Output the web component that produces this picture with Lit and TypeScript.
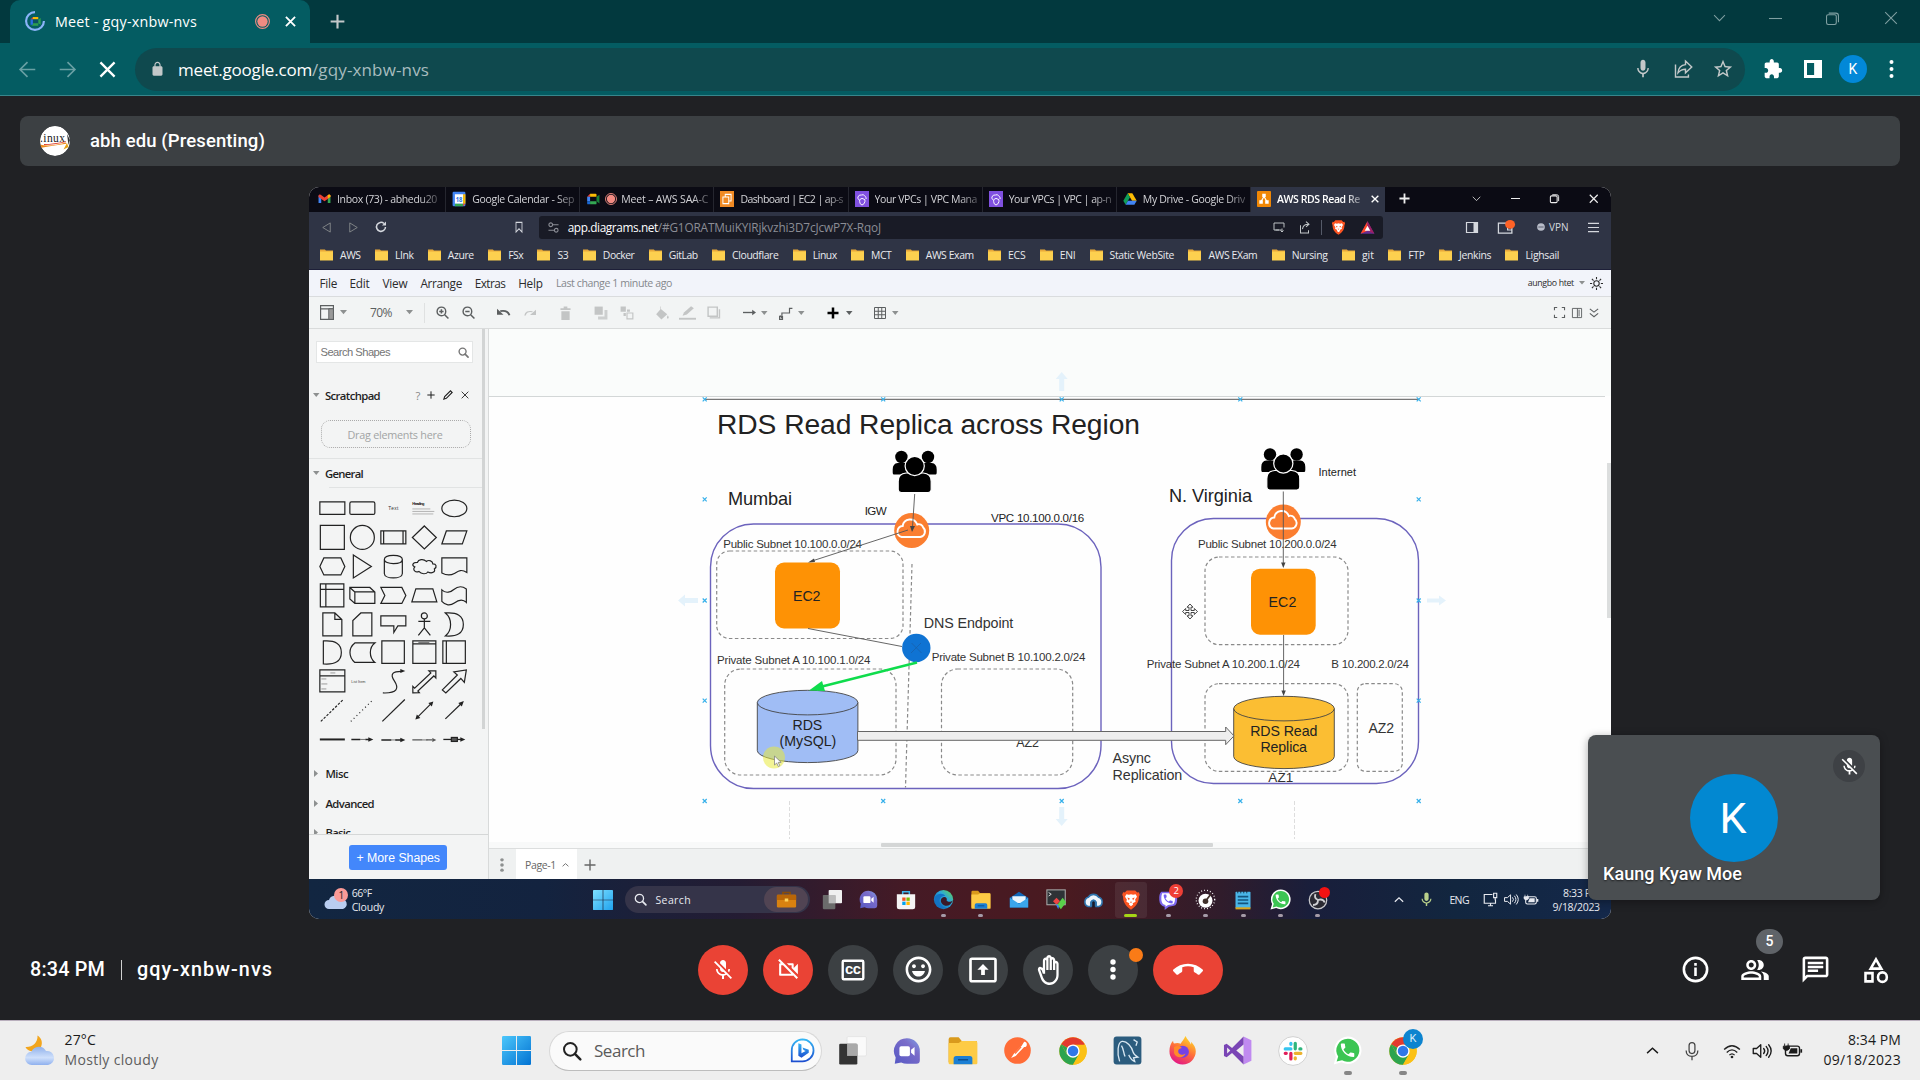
import { LitElement, html, svg, css, TemplateResult, SVGTemplateResult } from "lit";
import { customElement, property } from "lit/decorators.js";

/** A single line of text whose tracking is tuned so it fills a given width. */
@customElement("fit-label")
class FitLabel extends LitElement {
  @property() text = "";
  @property({ type: Number }) w = 0;
  static styles = css`
    :host { display: block; white-space: pre; text-align: left; }
    span { display: inline-block; }
  `;
  firstUpdated() {
    const s = this.renderRoot.querySelector("span") as HTMLElement;
    const natural = s.getBoundingClientRect().width;
    if (this.w && natural) s.style.letterSpacing = `${(this.w - natural) / this.text.length}px`;
  }
  render() {
    return html`<span>${this.text}</span>`;
  }
}

interface Item { x: number; w: number; c: TemplateResult }
const at = (cx: number, w: number, c: TemplateResult): Item => ({ x: cx - w / 2, w, c });
const tx = (x1: number, x2: number, text: string, cls = ""): Item => ({
  x: x1, w: x2 - x1, c: html`<fit-label class=${cls} .text=${text} .w=${x2 - x1}></fit-label>`,
});
/** Lays items out left to right, with the free space between them as margins. */
const strip = (start: number, items: Item[]) => {
  let edge = start;
  return items.map((it) => {
    const gap = it.x - edge;
    edge = it.x + it.w;
    return html`<div class="cell" style="width:${it.w}px;margin-left:${gap}px">${it.c}</div>`;
  });
};
const ic = (w: number, c: SVGTemplateResult, h = w, vb = "0 0 24 24") =>
  html`<svg class="ic" width=${w} height=${h} viewBox=${vb} preserveAspectRatio="none">${c}</svg>`;
const fillP = (d: string, f = "currentColor") => svg`<path d=${d} fill=${f} fill-rule="evenodd"/>`;
const line = (d: string, sw = 2, s = "currentColor", f = "none") =>
  svg`<path d=${d} fill=${f} stroke=${s} stroke-width=${sw}/>`;

const P = {
  micOff: "M19 11h-1.7c0 .74-.16 1.43-.43 2.05l1.23 1.23c.56-.98.9-2.09.9-3.28zm-4.02.17c0-.06.02-.11.02-.17V5c0-1.66-1.34-3-3-3S9 3.34 9 5v.18l5.98 5.99zM4.27 3L3 4.27l6.01 6.01V11c0 1.66 1.33 3 2.99 3 .22 0 .44-.03.65-.08l1.66 1.66c-.71.33-1.5.52-2.31.52-2.76 0-5.3-2.1-5.3-5.1H5c0 3.41 2.72 6.23 6 6.72V21h2v-3.28c.91-.13 1.77-.45 2.54-.9L19.73 21 21 19.73 4.27 3z",
  camOff: "M9.56 8l-2-2-4.15-4.14L2 3.27 4.73 6H4c-.55 0-1 .45-1 1v10c0 .55.45 1 1 1h12c.21 0 .39-.08.55-.18L19.73 21l1.41-1.41-8.86-8.86L9.56 8zM5 16V8h1.73l8 8H5zm10-8v2.61l6 6V6.5l-4 4V7c0-.55-.45-1-1-1h-5.61l2 2H15z",
  mood: "M11.99 2C6.47 2 2 6.48 2 12s4.47 10 9.99 10C17.52 22 22 17.52 22 12S17.52 2 11.99 2zM12 20c-4.42 0-8-3.58-8-8s3.58-8 8-8 8 3.58 8 8-3.58 8-8 8zm3.5-9c.83 0 1.5-.67 1.5-1.5S16.33 8 15.5 8 14 8.67 14 9.5s.67 1.5 1.5 1.5zm-7 0c.83 0 1.5-.67 1.5-1.5S9.33 8 8.5 8 7 8.67 7 9.5 7.67 11 8.5 11zM7 13.2h10c-.6 2.6-2.6 4.3-5 4.3s-4.4-1.7-5-4.3z",
  hand: "M21 7c0-1.38-1.12-2.5-2.5-2.5-.17 0-.34.02-.5.05V4c0-1.38-1.12-2.5-2.5-2.5-.23 0-.46.03-.67.09C14.46.66 13.56 0 12.5 0c-1.23 0-2.25.89-2.46 2.06C9.87 2.02 9.69 2 9.5 2 8.12 2 7 3.12 7 4.5v5.89c-.34-.31-.76-.54-1.22-.66L5.01 9.52c-.83-.23-1.7.09-2.19.83-.38.57-.4 1.31-.15 1.95l2.56 6.43C6.49 21.91 9.57 24 13 24c4.42 0 8-3.58 8-8V7zm-2 9c0 3.31-2.69 6-6 6-2.61 0-4.95-1.59-5.91-4.01l-2.6-6.54.53.14c.46.12.83.46 1 .9L7 15h2V4.5c0-.28.22-.5.5-.5s.5.22.5.5V12h2V2.5c0-.28.22-.5.5-.5s.5.22.5.5V12h2V4c0-.28.22-.5.5-.5s.5.22.5.5v8h2V7c0-.28.22-.5.5-.5s.5.22.5.5v9z",
  hang: "M12 9c-1.6 0-3.15.25-4.6.72v3.1c0 .39-.23.74-.56.9-.98.49-1.87 1.12-2.66 1.85-.18.18-.43.28-.7.28-.28 0-.53-.11-.71-.29L.29 13.08c-.18-.17-.29-.42-.29-.7 0-.28.11-.53.29-.71C3.34 8.78 7.46 7 12 7s8.66 1.78 11.71 4.67c.18.18.29.43.29.71 0 .28-.11.53-.29.71l-2.48 2.48c-.18.18-.43.29-.71.29-.27 0-.52-.11-.7-.28-.79-.74-1.69-1.36-2.67-1.85-.33-.16-.56-.5-.56-.9v-3.1C15.15 9.25 13.6 9 12 9z",
  people: "M16.67 13.13C18.04 14.06 19 15.32 19 17v3h4v-3c0-2.18-3.57-3.47-6.33-3.87zM15 12c2.21 0 4-1.79 4-4s-1.79-4-4-4c-.47 0-.91.1-1.33.24C14.5 5.27 15 6.58 15 8s-.5 2.73-1.33 3.76c.42.14.86.24 1.33.24zM9 12c2.21 0 4-1.79 4-4s-1.79-4-4-4-4 1.79-4 4 1.79 4 4 4zm0-6c1.1 0 2 .9 2 2s-.9 2-2 2-2-.9-2-2 .9-2 2-2zm0 7c-2.67 0-8 1.34-8 4v3h16v-3c0-2.66-5.33-4-8-4zm6 5H3v-.99C3.2 16.29 6.3 15 9 15s5.8 1.29 6 2v1z",
  chat: "M4 4h16v12H5.17L4 17.17V4m0-2c-1.1 0-1.99.9-1.99 2L2 22l4-4h14c1.1 0 2-.9 2-2V4c0-1.1-.9-2-2-2H4zm2 10h8v2H6v-2zm0-3h12v2H6V9zm0-3h12v2H6V6z",
  puzzle: "M20.5 11H19V7c0-1.1-.9-2-2-2h-4V3.5C13 2.12 11.88 1 10.5 1S8 2.12 8 3.5V5H4c-1.1 0-1.99.9-1.99 2v3.8H3.5c1.49 0 2.7 1.21 2.7 2.7s-1.21 2.7-2.7 2.7H2V20c0 1.1.9 2 2 2h3.8v-1.5c0-1.49 1.21-2.7 2.7-2.7 1.49 0 2.7 1.21 2.7 2.7V22H17c1.1 0 2-.9 2-2v-4h1.5c1.38 0 2.5-1.12 2.5-2.5S21.88 11 20.5 11z",
  star: "M22 9.24l-7.19-.62L12 2 9.19 8.63 2 9.24l5.46 4.73L5.82 21 12 17.27 18.18 21l-1.63-7.03L22 9.24zM12 15.4l-3.76 2.27 1-4.28-3.32-2.88 4.38-.38L12 6.1l1.71 4.04 4.38.38-3.32 2.88 1 4.28L12 15.4z",
  mic: "M12 14c1.66 0 2.99-1.34 2.99-3L15 5c0-1.66-1.34-3-3-3S9 3.34 9 5v6c0 1.66 1.34 3 3 3zm5.3-3c0 3-2.54 5.1-5.3 5.1S6.7 14 6.7 11H5c0 3.41 2.72 6.23 6 6.72V21h2v-3.28c3.28-.48 6-3.3 6-6.72h-1.7z",
  lock: "M18 8h-1V6c0-2.76-2.24-5-5-5S7 3.24 7 6v2H6c-1.1 0-2 .9-2 2v10c0 1.1.9 2 2 2h12c1.1 0 2-.9 2-2V10c0-1.1-.9-2-2-2zM8.9 6c0-1.71 1.39-3.1 3.1-3.1 1.71 0 3.1 1.39 3.1 3.1v2H8.9V6z",
  phone: "M6.62 10.79c1.44 2.83 3.76 5.14 6.59 6.59l2.2-2.2c.27-.27.67-.36 1.02-.24 1.12.37 2.33.57 3.57.57.55 0 1 .45 1 1V20c0 .55-.45 1-1 1-9.39 0-17-7.61-17-17 0-.55.45-1 1-1h3.5c.55 0 1 .45 1 1 0 1.25.2 2.45.57 3.57.11.35.03.74-.25 1.02l-2.2 2.2z",
};

/* ---------- generic glyphs ---------- */
const plus = (w: number, sw = 2.4) => ic(w, line("M12 1v22M1 12h22", sw));
const cross = (w: number, sw = 3) => ic(w, line("M2 2l20 20M22 2L2 22", sw));
const caret = (w = 7) => ic(w, fillP("M0 0h24L12 24z"), w * 0.6);
const caretR = ic(4, fillP("M0 0v24L24 12z"), 7);
const chev = (w: number, up = false, sw = 2) =>
  ic(w, line(up ? "M2 11L12 2l10 9" : "M2 2l10 10L22 2", sw), w * 0.6, "0 0 24 14");
const win = (w: number, c1: string, c2: string, id: string) =>
  ic(w, svg`<defs><linearGradient id=${id} x1="0" y1="0" x2="1" y2="1"><stop offset="0" stop-color=${c1}/><stop offset="1" stop-color=${c2}/></linearGradient></defs>
    <path fill="url(#${id})" d="M0 1a1 1 0 011-1h10.6v11.6H0zM12.4 0H23a1 1 0 011 1v10.6H12.4zM0 12.4h11.6V24H1a1 1 0 01-1-1zM12.4 12.4H24V23a1 1 0 01-1 1H12.4z"/>`);
const mag = (w: number, sw = 2.4) => ic(w, svg`<circle cx="10" cy="10" r="7.600" fill="none" stroke="currentColor" stroke-width=${sw}/><path d="M15.500 15.500L22 22" stroke="currentColor" stroke-width=${sw + 0.6} stroke-linecap="round"/>`);
const share = (w: number) => ic(w, svg`<path d="M3 6.500v15h15.500v-3" fill="none" stroke="currentColor" stroke-width="1.700"/><path d="M15 2.500l7.500 7-7.500 7v-4.300c-4 0-6.500 1.300-9 4.300.5-5 3.500-9.200 9-9.700z" fill="none" stroke="currentColor" stroke-width="1.700" stroke-linejoin="miter"/>`);
const volume = (w: number) => ic(w, svg`<g fill="none" stroke="currentColor" stroke-width="1.600" stroke-linecap="round" stroke-linejoin="round"><path d="M1.500 9h4l5-4.500v15l-5-4.500h-4zM14 9q2.500 3 0 6M17 6.500q4.500 5.500 0 11M20 4.500q6 7.500 0 15"/></g>`);
const battery = (w: number) => ic(w, svg`<rect x="4" y="7" width="16" height="11" rx="2.500" fill="none" stroke="currentColor" stroke-width="1.600"/><path d="M10 9.500h7.500v6H7.500z" fill="currentColor"/><path d="M22 10.500v4" stroke="currentColor" stroke-width="2"/><path d="M3 4v3M7 4v3M1.500 7h7v3q-3.500 4-7 0z" fill="currentColor" stroke="currentColor"/>`);

/* ---------- app icons ---------- */
const desktops = (w: number) => ic(w, svg`<rect x="7.500" y=".5" width="16" height="16" rx="1" fill="#fafafa" stroke="#dcdcdc" stroke-width=".5"/><rect x="1" y="6.500" width="15" height="17" rx="1" fill="#333"/><path d="M7.500 6.500H16v10H7.500z" fill="#a9a9a9"/>`);
const desktopsDark = (w: number) => ic(w, svg`<rect x="8" y="0" width="16" height="16" rx="1" fill="#f0f0f0"/><rect x="1" y="6" width="15" height="17" rx="1" fill="#6b6b6b"/><path d="M8 6h8v10H8z" fill="#bdbdbd"/>`);
const meetChat = (w: number) => ic(w, svg`<defs><linearGradient id="mc" x1="1" y1="0" x2="0" y2="1"><stop offset="0" stop-color="#7fa0e6"/><stop offset=".35" stop-color="#7a6cc9"/><stop offset="1" stop-color="#5558c4"/></linearGradient></defs><path d="M12 1a11 11 0 0111 11v8q0 3-3 3h-8a11 11 0 01-5-1.200L1.500 23l.8-5.500A11 11 0 0112 1z" fill="url(#mc)"/><rect x="5.500" y="8" width="9" height="8.500" rx="1.500" fill="#fff"/><path d="M15.500 11l3-2.500v7.500l-3-2.500z" fill="#fff"/>`);
const explorer = (w: number) => ic(w, svg`<path d="M.5 2.500q0-1.500 1.500-1.500h6.500L11 4h12v17H.5z" fill="#d99a1c"/><path d="M.5 5.500q5 0 8 0L11 4h11q1.500 0 1.500 1.500v16q0 1-1 1h-21q-1 0-1-1z" fill="#fdcb45"/><path d="M4.500 22.500v-4.500q0-2 2-2h11q2 0 2 2v4.500z" fill="#1b7fd4"/><path d="M8 19h8" stroke="#0b4f90" stroke-width="1.200"/>`);
const postman = (w: number) => ic(w, svg`<circle cx="12" cy="12" r="11" fill="#ff6c37"/><path d="M17.500 4.800a2.200 2.200 0 110 4.400l-7 7.300-3.800 1.700 2.300-3.500 6.500-6.600z" fill="#fff"/><path d="M15 9l-5 5.500" stroke="#ff6c37"/>`);
const chrome = (w: number) => ic(w, svg`<circle cx="12" cy="12" r="11" fill="#fbc116"/><path d="M12 12L2.500 6.500A11 11 0 0121.500 6.500z" fill="#e33b2e"/><path d="M2.500 6.500A11 11 0 0012 23l5-8.500L12 12 7 14.500z" fill="#2da44e"/><path d="M12 12L2.500 6.500 7.400 15z" fill="#2da44e"/><path d="M12 7h9.800A11 11 0 0112 23l4.700-8.500z" fill="#fbc116"/><circle cx="12" cy="12" r="5.300" fill="#fff"/><circle cx="12" cy="12" r="4.200" fill="#2f77ea"/>`);
const mysql = (w: number) => ic(w, svg`<rect x=".5" y=".5" width="23" height="23" rx="2.500" fill="#2b5c7e"/><path d="M5.500 21C3 14 4 5 7.500 4.500c4-.5 8 4.500 9 8.500.4 2 1.500 3 4 4.500l-3.500.6 1 3c-3-1-4-3.500-5-5.500M7 8c2 3 1.500 6 3 9M17 3l3 2-1 3" fill="none" stroke="#d9e8f2" stroke-width="1.100"/>`);
const firefox = (w: number) => ic(w, svg`<defs><linearGradient id="ff" x1=".8" y1="0" x2=".3" y2="1"><stop offset="0" stop-color="#ffe226"/><stop offset=".5" stop-color="#ff7139"/><stop offset="1" stop-color="#e31587"/></linearGradient></defs><path d="M14.500 0c1 2.500 3.500 4.500 4.500 7 .3-.8.200-1.500 0-2.300 2.500 2.300 4 5 4 8A10.900 10.900 0 011.200 12.600C1.200 9 2.300 6 4.200 4c0 1 .2 1.800.7 2.300C7 5.500 9 5.500 10.500 6.500c1-2 2.500-3.500 4-6.500z" fill="url(#ff)"/><circle cx="12.300" cy="13" r="5" fill="#7542e5"/><path d="M5 9c3-1.500 5-.5 6.500 1-2 .3-3.500 1.500-3 3.500.7 2.500 4 2.500 6 1-1 4-8 4.500-9.500-.5z" fill="#ff8a2a"/>`);
const vs = (w: number) => ic(w, svg`<path d="M17 .5L23.500 3.500v17L17 23.500z" fill="#c08af0"/><path d="M17 .5L7.500 10 3 6.500.8 7.500v9L3 17.500 7.500 14 17 23.500V17L11 12l6-5z" fill="#7a45b5"/><path d="M3.400 9.500v5L6 12z" fill="#eee"/>`);
const slack = (w: number) => ic(w, svg`<circle cx="12" cy="12" r="11.500" fill="#fff" stroke="#ccc" stroke-width=".7"/><g stroke-width="2.600" stroke-linecap="round"><path d="M10.300 5.800v.8M5.800 10.300h4.500" stroke="#36c5f0"/><path d="M13.800 10.200V5.800M18.300 10.300h-.8" stroke="#2eb67d"/><path d="M13.800 13.800h4.500M13.800 18.200v-.8" stroke="#ecb22e"/><path d="M10.300 13.800v4.500M5.800 13.800h.8" stroke="#e01e5a"/></g>`);
const whatsapp = (w: number) => ic(w, svg`<path d="M12.300.5a11.300 11.300 0 11-5.300 21.300L.6 23.500l1.800-6.300A11.300 11.300 0 0112.300.5z" fill="#fff"/><path d="M12.300 2.300a9.500 9.500 0 11-4.800 17.700L3 21.200l1.300-4.300a9.500 9.500 0 018-14.600z" fill="#3cc553"/><g transform="translate(4.600 4.400) scale(.62)"><path d=${P.phone} fill="#fff"/></g>`);
const edge = (w: number) => ic(w, svg`<defs><linearGradient id="eg" x1="0" y1="1" x2="1" y2="0"><stop offset="0" stop-color="#0c59a4"/><stop offset=".6" stop-color="#2aa7dd"/><stop offset="1" stop-color="#6ad83f"/></linearGradient></defs><circle cx="12" cy="12" r="11" fill="url(#eg)"/><path d="M9 13c0-2.500 2-4 4-4s3.500 2 2.500 4c1.500 2 5 2 7 0-1.500 4-4 6-7 6-4 0-6.500-3-6.500-6z" fill="#3a1a28"/><path d="M2 9c4-5 10-4 12-1-5-1-8 4-6 8 1 3 4 5 7 5.500C8 24 1 19 2 9z" fill="#1373c4"/>`);
const brave = (w: number) => ic(w, svg`<path d="M7 .5h10l2.500 2.500 2-.3 1 3-1 2.500c0 6-2.500 10.800-9.500 15.500C5 19 2.500 14.200 2.500 8.200l-1-2.500 1-3 2 .3z" fill="#fb5422"/><path d="M6.500 5l3 .8L12 5l2.500.8 3-.8 1.700 3-2.200 3.500.5 2.500-3.500 2 .5 1.500-2.500 2-2.500-2 .5-1.500-3.500-2 .5-2.500L4.800 8z" fill="#fff"/><path d="M7.500 9l3 1-1 2.500zM16.500 9l-3 1 1 2.500zM10.500 14h3L12 15.500z" fill="#fb5422"/>`);
const meetLogo = (w: number) => ic(w, svg`<path d="M2 8l5-5v5z" fill="#ea4335"/><path d="M7 3h9.500Q18 3 18 4.500V8H7z" fill="#fbbc04"/><path d="M2 8h5v8H2z" fill="#4285f4"/><path d="M2 16h5v5H3.500Q2 21 2 19.500z" fill="#1967d2"/><path d="M7 16h11v3.500Q18 21 16.500 21H7z" fill="#34a853"/><path d="M18 8l5-3.500v15L18 16z" fill="#188038"/>`);
const rec = (w: number) => ic(w, svg`<circle cx="12" cy="12" r="11" fill="none" stroke="#f28b82" stroke-width="1.800"/><circle cx="12" cy="12" r="8.300" fill="#f28b82"/>`);
const folder = ic(13, svg`<path d="M0 1h9l2 2h13v17H0z" fill="#e9a93a"/><path d="M0 5h24v18H0z" fill="#fdd04f"/>`, 12);
const cloudMoon = ic(32, svg`<defs><linearGradient id="cl" x1="0" y1="0" x2="0" y2="1"><stop offset="0" stop-color="#8fb0ea"/><stop offset=".6" stop-color="#cfe0fb"/><stop offset="1" stop-color="#8fb0ee"/></linearGradient></defs><path d="M13.500.5c4 2.500 5.500 7 3.500 11.500l-8 4.500C5 16 2.500 14.500 1.500 12 8 12.500 14 8 13.500.5z" fill="#f2a51d"/><path d="M8 30a6.600 6.600 0 01-.6-13.200A8 8 0 0122 16a7 7 0 012 14z" fill="url(#cl)"/>`, 32, "0 0 32 32");

/* ---------- shape library ---------- */
const k = "#222";
const sh = (c: SVGTemplateResult) => html`<svg class="ic" viewBox="-15.350 -14.450 30.700 28.900"><g fill="none" stroke=${k} stroke-width="1.200">${c}</g></svg>`;
const pth = (d: string) => svg`<path d=${d}/>`;
const shapes: TemplateResult[] = [
  sh(pth("M-12.500-6.500h25v12.500h-25z")),
  sh(svg`<rect x="-12.500" y="-6.500" width="25" height="12.500" rx="1.500"/>`),
  sh(svg`<text x="-5" y="2" font-size="4.800" fill="#333" stroke="none" textLength="10">Text</text>`),
  sh(svg`<text x="-12" y="-3" font-size="4" font-weight="bold" fill="#111" stroke="none" textLength="12">Heading</text><path d="M-12 .5h18M-12 3h22M-12 5.500h21" stroke="#999" stroke-width=".7"/>`),
  sh(svg`<ellipse rx="12.500" ry="8.300"/>`),
  sh(pth("M-12-12h24v24h-24z")), sh(svg`<circle r="12"/>`),
  sh(pth("M-12.500-6.500h25v13h-25zM-9.700-6.500v13M9.700-6.500v13")),
  sh(pth("M0-11.500L12 0 0 11.500-12 0z")), sh(pth("M-8-6.500h20.500L8 6.500h-20.500z")),
  sh(pth("M-8.500-8.500h17l4 8.500-4 8.500h-17l-4-8.500z")), sh(pth("M-9-11.500L9 0-9 11.500z")),
  sh(pth("M-9-7v14c0 6 18 6 18 0V-7c0-5.500-18-5.500-18 0s18 5.500 18 0")),
  sh(pth("M-7-4c-5 0-6 3-2.500 4.500-3 3 1 6 4 4.500C-3 8 2 8 3.500 5.500c4 2 8 0 6.500-3 3-2 2-5-1.500-5 0-3-4-4.500-6.500-2.500C-1-8-6-7-7-4z")),
  sh(pth("M-12.500-8.500h25V6c-6-4-9-1-12.500 1s-8 2-12.500-.5z")),
  sh(pth("M-12-11.500h23.500v23h-23.500zM-12-6h23.500M-6.500-11.500v23")),
  sh(pth("M-12.500-8h20l5 4.500V8h-20l-5-4.500zM-12.500-8l5 4.500M-7.500 8V-3.500h20")),
  sh(pth("M-12.500-8h21l4 8-4 8h-21l4-8z")), sh(pth("M-8.500-6.500h17l4 13h-25z")),
  sh(pth("M-12.500-5.500c4 4 9 2 12-.5s7-4.500 12.500-.5V7C8 3 4 4.500 0 7.500S-9 10-12.500 6z")),
  sh(pth("M-9.500-11.500H2.500l7 6.500v16.500h-19zM2.500-11.500V-5h7")), sh(pth("M-1.500-11.500H9.500v23h-19V-4z")),
  sh(pth("M-12.500-8.500h25V1.500H4.500L.5 8V1.500h-13z")),
  sh(svg`<circle cy="-8.500" r="3"/><path d="M0-5.500v9M-6-3h12M0 3.500L-6 11M0 3.500L6 11"/>`),
  sh(pth("M-9-11.500c12-1 18 3 18 11.500S3 12.500-9 11.500C-2 6-2-6-9-11.500z")),
  sh(pth("M-9-11.500c12-1 18 3 18 11.500S3 12.500-9 11.500z")),
  sh(pth("M-7.500-9.500h20c-6 4.500-6 14.500 0 19.500h-20c-6.500-5.500-6.500-14.500 0-19.500z")),
  sh(pth("M-11.500-11.500h22.500v22.500h-22.500z")),
  sh(svg`<path d="M-11.500-11.500h23v22.500h-23zM-11.500-8.500h23"/><path d="M-6-10h11" stroke-width=".6"/>`),
  sh(svg`<path d="M-11.500-11.500h22.500v22.500h-22.500zM-8-11.500v22.500"/>`),
  sh(svg`<path d="M-12.500-11.500h25v22h-25zM-12.500-5.500h25"/><path d="M-2-8.500h5M-11-2.500h5M-11 2.500h6M-11 7.500h5" stroke="#777" stroke-width=".7"/>`),
  sh(svg`<text x="-11" y="1.500" font-size="3.800" fill="#444" stroke="none" textLength="14">List Item</text>`),
  sh(svg`<path d="M-10.500 11.500C4 12 6 7 1-.5S0-10 8-10"/><path d="M12-10.500l-5-2v4z" fill=${k} stroke="none"/>`),
  sh(pth("M-11.500 11.500v-6.500l1.800 1.800L6.500-8.500 4.500-10.500h7v7L9.500-5.500-6.500 9.500l1.500 1.800z")),
  sh(pth("M-12 8.500L3-6.500-.5-9.500 12-11.500 10 1 6.500-3-8.500 11.500z")),
  sh(svg`<path d="M-11.500 11L11-11" stroke-dasharray="2.500 1.500"/>`),
  sh(svg`<path d="M-11.500 11L11-11" stroke-dasharray="1 3"/>`),
  sh(pth("M-11 11L11.500-11")),
  sh(svg`<path d="M-7 7L7-7"/><path d="M9-9l-5 1.500L7.500-4zM-9 9l5-1.500L-7.500 4z" fill=${k} stroke="none"/>`),
  sh(svg`<path d="M-9 8.500L7-7"/><path d="M9.500-9.500l-5.500 2L7.500-4z" fill=${k} stroke="none"/>`),
  sh(svg`<path d="M-12.500 0h25" stroke-width="2"/>`),
  sh(svg`<path d="M-11 0h9M3 0h4" stroke-width="1.500"/><path d="M-2 0h5" stroke-width=".6"/><path d="M11 0L6-2.200v4.400z" fill=${k} stroke="none"/>`),
  sh(svg`<path d="M-12 .5h10M2 .5h6" stroke-width="1.500"/><path d="M-2 .5h5" stroke-width=".6"/><path d="M12 .5L7-1.700v4.400z" fill=${k} stroke="none"/>`),
  sh(svg`<path d="M-12 .5h10M2 .5h6" stroke="#555" stroke-width="1.300"/><path d="M-2 .5h5" stroke-width=".6"/><path d="M12 .5L8-1.500v4z" fill="#555" stroke="none"/>`),
  sh(svg`<path d="M-11 0h18" stroke-width="1.300"/><path d="M11 0L6-2.200v4.400z" fill=${k} stroke="none"/><rect x="-3" y="-2" width="6" height="4" fill="#555"/>`),
];

/* ---------- diagram ---------- */
const st = (x1: number, x2: number, y: number, fs: number, t: string) =>
  svg`<text x=${x1} y=${y} font-size=${fs} textLength=${x2 - x1}>${t}</text>`;
const dash = (x: number, y: number, x2: number, y2: number, r: number) =>
  svg`<rect x=${x} y=${y} width=${x2 - x} height=${y2 - y} rx=${r} class="dash"/>`;
const cyl = (x: number, y: number, f: string) =>
  svg`<path d="M${x} ${y + 12.3}v48a50.300 12 0 00100.600 0v-48z" fill=${f} stroke="#444" stroke-width=".9"/><ellipse cx=${x + 50.3} cy=${y + 12.3} rx="50.300" ry="12.300" fill=${f} stroke="#444" stroke-width=".9"/>`;
const crowd = (x: number, y: number) => svg`<g transform="translate(${x} ${y})"><circle cx="-13.300" cy="6.500" r="6.200"/><circle cx="13.300" cy="6.500" r="6.200"/>
  <path d="M-22 22v-3q0-6 5-6.500h10v11.500h-14q-1 0-1-2zM22 22v-3q0-6-5-6.500H7v11.500h14q1 0 1-2z"/>
  <path d="M-16.500 39V31q0-8 8-8.500h17q8 .5 8 8.500v8q0 3-3 3h-27q-3 0-3-3z" stroke="#fff" stroke-width="1.200"/><circle cy="15.500" r="9.600" stroke="#fff" stroke-width="1.200"/></g>`;
const igw = (x: number, y: number) => svg`<g transform="translate(${x} ${y})"><circle r="17.500" fill="#fb7e30"/><path d="M-9.500 6.500h18.500a5.500 5.500 0 003-9.500 4.500 4.500 0 00-6-3A7.500 7.500 0 00-8.500-4.500 5.600 5.600 0 00-9.500 6.500z" transform="translate(-.5 0)" fill="none" stroke="#fff" stroke-width="1.900"/></g>`;
const marks: [number, number][] = [];
for (const y of [399.3, 801]) for (const x of [704.7, 883.2, 1061.7, 1240.3, 1418.7]) marks.push([x, y]);
for (const y of [499.3, 600.5, 700.6]) for (const x of [704.7, 1418.7]) marks.push([x, y]);

const diagram = html`<svg class="canvas" width="1122" height="519" viewBox="489 329 1122 519">
  <rect x="489" y="329" width="1122" height="519" fill="#fefefe"/>
  <rect x="489" y="329" width="1122" height="67" fill="#fafcfb"/>
  <path d="M489 396.500H1605" stroke="#d3d7d7"/>
  <path d="M704.700 399.300H1418.700" stroke="#777" stroke-width="1.300"/>
  <g fill="#e4f2fb"><path d="M1061.700 372l6 7h-3.500v12h-5v-12h-3.500zM1061.700 826l6-7h-3.500v-12h-5v12h-3.500zM678 600.500l7-6v3.500h13v5h-13v3.500zM1446 600.500l-7-5v3h-12v4h12v3z"/></g>
  <path d="M789.500 801V839M1294.500 801V839" stroke="#ddd" stroke-dasharray="4 2"/>
  <g fill="#222">
    ${st(717, 1140, 434.3, 28.2, "RDS Read Replica across Region")}
    ${st(728, 792, 505, 18.2, "Mumbai")}${st(864.8, 886.6, 515, 11.6, "IGW")}
    ${st(991, 1084.3, 522, 11.6, "VPC 10.100.0.0/16")}${st(1169, 1252, 501.5, 18.2, "N. Virginia")}
    ${st(1318.5, 1356, 476.3, 11, "Internet")}
  </g>
  <g fill="none" stroke="#6c63bd" stroke-width="1.400"><rect x="710.500" y="524" width="390.500" height="264.500" rx="43"/><rect x="1171.500" y="518.500" width="247" height="265" rx="42"/></g>
  ${dash(716.7, 551, 903, 638.5, 13)}${dash(724.7, 669, 896, 775, 16)}${dash(941.5, 669, 1072.7, 775, 16)}
  ${dash(1205, 557, 1348, 644.7, 14)}${dash(1205, 683.7, 1348, 771.3, 14)}${dash(1357.3, 683.7, 1402.3, 771.3, 8)}
  <path d="M912 564L905.500 787.500" class="dash"/>
  <g fill="#333">
    ${st(723.2, 862, 548, 11.5, "Public Subnet 10.100.0.0/24")}${st(717, 870.3, 664, 11.5, "Private Subnet A 10.100.1.0/24")}
    ${st(931.7, 1085.3, 661, 11.5, "Private Subnet B 10.100.2.0/24")}${st(923.8, 1013.3, 628, 14.3, "DNS Endpoint")}
    ${st(1198, 1336.7, 548, 11.5, "Public Subnet 10.200.0.0/24")}${st(1146.7, 1300, 667.5, 11.5, "Private Subnet A 10.200.1.0/24")}
    ${st(1331.3, 1409, 667.5, 11.5, "B 10.200.2.0/24")}${st(1016.3, 1039, 746.5, 12.5, "AZ2")}
    ${st(1112.6, 1151, 763, 14.3, "Async")}${st(1112.6, 1182.3, 780, 14.3, "Replication")}
    ${st(1368.5, 1394, 733, 14, "AZ2")}${st(1268.3, 1293.3, 782, 13.5, "AZ1")}
  </g>
  ${crowd(914.7, 450.5)}${crowd(1283.3, 448)}${igw(911.7, 530.5)}${igw(1283.3, 522)}
  <rect x="775" y="562.500" width="65" height="66" rx="9" fill="#fe9205"/><rect x="1251" y="568.700" width="64.700" height="66" rx="9" fill="#fe9205"/>
  <circle cx="916.300" cy="648" r="14.200" fill="#0f73d3"/>
  <path d="M911.500 643l10 10M921 643l-10 10" stroke="#1661ac" stroke-width=".8"/>
  ${cyl(757.3, 690.3, "#a0bdf5")}${cyl(1233.7, 696.3, "#fbbe33")}
  <g fill="none" stroke="#555" stroke-width=".9"><path d="M914.700 494L912.500 527M908 530L812 561M808 628.500L902 646.500M1283.300 491.500V563M1283.600 635V691"/></g>
  <g fill="#444"><path d="M808 562.500l6-4 1 3.500zM912 532l-2-6h5zM1283.300 568l-2.200-5.500h4.400zM1283.600 696l-2.200-5.500h4.400z"/></g>
  <path d="M917 662.500L822 686.500" stroke="#0fdc4c" stroke-width="2.400"/><path d="M809 690.500l13-9.500 3 10z" fill="#0fdc4c"/>
  <path d="M857.500 731.500H1225.700V727L1234 735.900 1225.700 744.700V740.300H857.500z" fill="#eeeeee" stroke="#666" stroke-width="1"/>
  <g fill="#222">${st(793, 820.5, 601, 14.2, "EC2")}${st(1268.6, 1296.3, 607, 14.2, "EC2")}${st(792.5, 822.3, 729.5, 14.2, "RDS")}${st(779.5, 836.3, 746, 14.2, "(MySQL)")}
    ${st(1250.2, 1317.3, 735.5, 14.2, "RDS Read")}${st(1260.5, 1307, 752, 14.2, "Replica")}</g>
  <circle cx="774" cy="757.500" r="11" fill="#e8ea3c" opacity=".55"/>
  <path d="M774.500 756v9l2.200-2 1.600 3.500 1.500-.8-1.600-3.300h3z" fill="#fff" stroke="#777" stroke-width=".7"/>
  <g transform="translate(1190 611.500)" fill="#fff" stroke="#333" stroke-width=".9"><path d="M0-7.500l3 3.200H1V-1h3.300v-2L7.500 0 4.300 3V1H1v3.300h2L0 7.500-3 4.300h2V1h-3.300v2L-7.500 0l3.200-3v2H-1v-3.300h-2z"/></g>
  <g stroke="#36b0ea" stroke-width="1.200">${marks.map(([x, y]) => svg`<path d="M${x - 2} ${y - 2}l4 4M${x + 2} ${y - 2}l-4 4"/>`)}</g>
  <rect x="1607" y="463" width="4" height="155" fill="#dcdede"/>
  <rect x="489" y="842" width="1122" height="6" fill="#f8f9f9"/><rect x="881" y="843" width="332" height="4" rx="1" fill="#d4d6d6"/>
</svg>`;

const bookmarks: [string, number][] = [
  ["AWS", 20.6], ["LInk", 18.5], ["Azure", 26], ["FSx", 15], ["S3", 11], ["Docker", 31.6], ["GitLab", 29], ["Cloudflare", 46.3],
  ["Linux", 24], ["MCT", 20.3], ["AWS Exam", 48], ["ECS", 17.3], ["ENI", 15.5], ["Static WebSite", 64.5], ["AWS EXam", 49],
  ["Nursing", 35.8], ["git", 12], ["FTP", 16.5], ["Jenkins", 32], ["Lighsail", 33.8],
];
const gm = ic(13, svg`<path d="M1 20V5l5 4v11z" fill="#4285f4"/><path d="M18 20V9l5-4v15z" fill="#34a853"/><path d="M1 5q1-3 4-1.500L12 9l7-5.500q3-1.500 4 1.500v3l-11 8.500L1 8z" fill="#ea4335"/><path d="M18 5v6l5-3.500V5q-1-3-4-1.500z" fill="#fbbc04"/>`, 12);
const cal = ic(14, svg`<rect x="1" y="1" width="22" height="22" rx="2" fill="#4285f4"/><path d="M5 5h14v14H5z" fill="#fff"/><path d="M19 5h4v14h-4z" fill="#fbbc04"/><path d="M5 19h14v4H5z" fill="#34a853"/><path d="M19 19h4l-4 4z" fill="#ea4335"/><text x="6.500" y="16" font-size="10" font-weight="bold" fill="#1a73e8">18</text>`, 16);
const ec2 = ic(14, svg`<rect width="24" height="24" fill="#f08a24"/><path d="M5 9h10v10H5zM9 9V5h10v10h-4" fill="none" stroke="#fff" stroke-width="1.700"/>`, 16);
const vpc = ic(14, svg`<rect width="24" height="24" fill="#8050e0"/><path d="M7 13q-3-1-2-4 2-4 6-3 4-2 6 2 3 1 2 4M12 11l5 2v3q-1 4-5 5-4-1-4-5v-3z" fill="none" stroke="#fff" stroke-width="1.500"/>`, 16);
const drive = ic(14, svg`<path d="M8 2h8l7.500 13h-8z" fill="#fbbc04"/><path d="M8 2l4 7-7.500 13L.5 15z" fill="#0f9d58"/><path d="M8.500 15h15l-4 7h-15z" fill="#4285f4"/>`);
const dio = ic(14, svg`<rect width="24" height="24" rx="1.500" fill="#f08705"/><path d="M12 8L7 16M12 8l5 8" stroke="#fff" stroke-width="1.800"/><path d="M9 4h6v5H9zM4 14h6v5H4zM14 14h6v5h-6z" fill="#fff"/>`, 16);
const vtabs: [TemplateResult, string, number, boolean?][] = [
  [gm, "Inbox (73) - abhedu20", 100], [cal, "Google Calendar - Sep", 102], [meetLogo(14), "Meet – AWS SAA-C", 87, true],
  [ec2, "Dashboard | EC2 | ap-s", 102.5], [vpc, "Your VPCs | VPC Mana", 102.5], [vpc, "Your VPCs | VPC | ap-n", 102.5], [drive, "My Drive - Google Driv", 102],
];

@customElement("app-root")
class AppRoot extends LitElement {
  static styles = css`
    :host { display: block; width: 1920px; height: 1080px; overflow: hidden; font-family: "Open Sans", "Noto Sans", sans-serif; }
    * { box-sizing: border-box; }
    svg { fill: currentColor; }
    .page { width: 1920px; height: 1080px; display: flex; flex-direction: column; background: #202124; }
    .row { display: flex; align-items: center; flex: none; }
    .cell { flex: none; display: flex; justify-content: center; align-items: center; }
    .ic { display: block; flex: none; overflow: visible; }
    fit-label { width: 100%; }

    .tabs { height: 43px; background: #02393e; color: #7f9fa1; align-items: stretch; }
    .tab { width: 300px; margin-left: 10px; background: #045c62; border-radius: 10px 10px 0 0; color: #fff; font-size: 14.3px; display: flex; align-items: center; padding-bottom: 1px; }
    .tabs .rest { display: flex; align-items: center; }
    .tabs .ctl { align-items: center; display: flex; padding-bottom: 7px; }
    .nav { height: 52px; background: #045c62; color: #fff; }
    .omni { width: 1610px; height: 43px; border-radius: 22px; background: #0f494e; display: flex; align-items: center; font-size: 17px; color: #fff; }
    .dim { color: #a7bcbe; } .grey { color: #c3c8c9; } .faint { color: #69a0a4; }
    .edge { height: 1px; background: #37868c; flex: none; }
    .av { width: 28px; height: 28px; border-radius: 50%; background: #0288d8; display: grid; place-items: center; font: 14px Roboto, sans-serif; color: #fff; }

    .meet { height: 924px; display: flex; flex-direction: column; color: #fff; font-family: Roboto, sans-serif; position: relative; }
    .presenting { height: 50px; margin: 20px 20px 0; border-radius: 8px; background: #3c4043; display: flex; align-items: center; font-weight: 500; font-size: 18.5px; }
    .video { margin: 21px 0 0 309px; width: 1302px; height: 732px; border-radius: 10px; overflow: hidden; display: flex; flex-direction: column; font-family: "Open Sans", sans-serif; background: #fff; }

    .vtabs { height: 25px; background: #0b0b14; color: #d4d4d8; font-size: 10.5px; padding-left: 3px; align-items: stretch; }
    .vt { width: 134.15px; padding: 0 0 2px 6px; display: flex; align-items: center; gap: 6px; border-right: 1px solid #25262f; overflow: hidden; flex: none; }
    .vt.r { gap: 4.500px; }
    .vt .name { flex: none; -webkit-mask-image: linear-gradient(90deg, #000 82%, rgba(0,0,0,.35)); }
    .vt.on { background: #2f3445; color: #fff; font-weight: 600; border: 0; }
    .vctl { display: flex; align-items: center; color: #eee; padding-bottom: 2px; }
    .vnav { height: 29px; background: #2f3445; color: #d5d8de; padding-top: 1px; }
    .vnav .vpn { font-size: 10px; }
    .vurl { width: 844px; height: 23px; background: #191b26; border-radius: 3px; display: flex; align-items: center; font-size: 11.8px; color: #fff; }
    .vurl .p { color: #8b8d95; }
    .marks { height: 28px; background: #2f3445; padding: 0 0 1px 11px; color: #e9eaee; font-size: 10.4px; }
    .marks .bm { display: flex; align-items: center; gap: 7px; margin-right: 14.35px; }
    .vedge { height: 1px; background: #1d1f38; flex: none; }
    .menu { height: 27px; background: #f2f4fa; border-bottom: 1px solid #dadcde; color: #2b2b2b; font-size: 11.8px; }
    .menu .chg { color: #85888d; font-size: 10.6px; } .menu .usr { font-size: 8.8px; }
    .tools { height: 32px; background: #f2f4f4; border-bottom: 1px solid #d9dbdb; color: #5c5f60; font-size: 12px; }
    .off { color: #c3c5c5; } .mid { color: #8d9090; } .blk { color: #000; }
    .work { display: flex; height: 550px; flex: none; }
    .side { width: 180px; background: #f3f4f4; display: flex; flex-direction: column; border-right: 1px solid #d8dada; color: #1f1f1f; }
    .scroll { height: 506px; overflow: hidden; border-bottom: 1px solid #d5d7d7; display: flex; flex: none; }
    .lib { width: 173px; flex: none; }
    .thumb { width: 3px; height: 400px; background: #d2d4d4; }
    .search { width: 157px; height: 22px; margin: 12px 0 22px 7px; background: #fff; border: 1px solid #e4e6e6; display: flex; align-items: center; font: 11.200px "Liberation Sans", sans-serif; color: #757575; }
    .sec { display: flex; align-items: center; height: 20px; font-weight: 600; font-size: 11.3px; color: #1f1f1f; }
    .sec .g { color: #888; font-weight: 400; }
    .drop { width: 150px; height: 28px; margin: 15px 0 10px 12px; border: 1.5px dotted #aaa; border-radius: 9px; display: flex; align-items: center; color: #a2a4a4; font-size: 10.8px; }
    .hr { height: 1px; background: #e1e3e3; }
    .gen { margin: 4px 0; }
    .hr2 { height: 1px; background: #e1e3e3; margin-left: 20px; }
    .shapes { margin: 6px 0 9.500px 7.5px; display: grid; grid-template-columns: repeat(5, 30.7px); grid-auto-rows: 28.9px; }
    .shapes svg { width: 30.7px; height: 28.9px; font-family: "Liberation Sans", sans-serif; }
    .closed { margin-bottom: 9.500px; }
    .more { margin: 10px 0 0 40px; width: 98px; height: 25px; border-radius: 3px; background: #4387fb; color: #fff; display: flex; align-items: center; font: 12.3px "Liberation Sans", sans-serif; }
    .main { width: 1122px; display: flex; flex-direction: column; }
    .canvas { display: block; flex: none; font-family: "Liberation Sans", sans-serif; fill: #000; }
    .dash { fill: none; stroke: #8a8a8a; stroke-width: 1.2px; stroke-dasharray: 3.5px 2.5px; }
    .pages { height: 31px; background: #eff1f1; border-top: 1px solid #dcdede; color: #666; font-size: 10.5px; }
    .pages .cell { padding-top: 1px; }
    .ptab { height: 31px; width: 61px; background: #fff; display: flex; align-items: center; }
    .vbar { height: 40px; padding-top: 1px; color: #e8eaf0; font-size: 10.5px; background: linear-gradient(90deg, #122641 0, #13233f 18%, #241c33 33%, #451a25 46%, #4a1a20 58%, #301c2b 70%, #191e3b 77%, #12263f 88%, #14284a 100%); }
    .vs { width: 185px; height: 27px; border-radius: 14px; background: #353449; display: flex; align-items: center; }
    .brief { width: 44px; height: 25px; border-radius: 13px; background: #514453; display: grid; place-items: center; }
    .two { display: flex; flex-direction: column; width: 100%; }
    .two.v { line-height: 14px; }
    .in1 { padding-left: 10.500px; } .in2 { padding-left: 24.500px; }
    .tb { position: relative; display: grid; place-items: center; height: 36px; width: 32px; }
    .tb.hot { background: rgba(255, 255, 255, 0.07); border-radius: 3px; }
    .tb i { position: absolute; bottom: 1px; width: 5px; height: 2.5px; border-radius: 2px; background: #a59ba8; }
    .tb.hot i { width: 13px; background: #a6d616; }
    .tb b { position: absolute; top: 2px; right: 1px; min-width: 14px; height: 14px; border-radius: 50%; background: #ee3f36; color: #fff; font-size: 9.500px; line-height: 14px; font-weight: 400; text-align: center; }
    .tb b.rd { background: #f31212; min-width: 11px; height: 11px; top: 5px; right: 4px; }
    .lime { color: #b9d08a; }

    .tile { position: absolute; left: 1588px; top: 639px; width: 292px; height: 165px; border-radius: 8px; background: #4a4e51; box-shadow: 0 2px 8px rgba(0, 0, 0, 0.35); display: flex; flex-direction: column; align-items: center; }
    .tile .k { width: 88px; height: 88px; margin-top: 39px; border-radius: 50%; background: #0288d1; display: grid; place-items: center; font-size: 43px; line-height: 1; padding-right: 2px; }
    .tile .nm { align-self: flex-start; margin: 0 0 0 15px; font-weight: 500; font-size: 18px; line-height: 24px; width: 139px; text-shadow: 0 1px 2px rgba(0, 0, 0, 0.6); }
    .tile .mb { position: absolute; right: 15px; top: 15px; width: 32px; height: 32px; border-radius: 50%; background: #3e4145; display: grid; place-items: center; }

    .bar { height: 101px; display: flex; align-items: center; font-weight: 500; font-size: 19.8px; }
    .bar .sep { width: 1px; height: 20px; background: #d0d0d0; }
    .btn { height: 50px; border-radius: 25px; background: #3c4043; display: grid; place-items: center; position: relative; width: 100%; }
    .btn.red { background: #ea4335; }
    .btn i { position: absolute; right: -5px; top: 3px; width: 14px; height: 14px; border-radius: 50%; background: #fa7b17; }
    .ppl { position: relative; }
    .ppl b { position: absolute; left: 16px; top: -26px; width: 27px; height: 25px; border-radius: 13px; background: #5f6368; font-size: 14px; font-weight: 500; display: grid; place-items: center; }

    .os { height: 60px; background: #eeeeee; border-top: 1px solid #b9afbd; color: #1b1b1b; font-size: 14px; }
    .os .sub { color: #5d5d5d; }
    .two.o { line-height: 20px; padding-bottom: 2px; }
    .os .pill { width: 273px; height: 40px; border-radius: 20px; background: #fafafa; border: 1px solid #d8d8d8; border-bottom-color: #bdbdbd; display: flex; align-items: center; font-size: 17px; color: #5b5b5b; }
    .ink { color: #222; }
    .oi { position: relative; height: 59px; width: 36px; display: grid; place-items: center; }
    .oi i { position: absolute; bottom: 5px; width: 8px; height: 4px; border-radius: 2px; background: #868686; }
    .oi b { position: absolute; right: -2px; top: 8px; width: 20px; height: 20px; border-radius: 50%; background: #0d84cf; color: #d8ecf8; font: 11px/20px Roboto, sans-serif; text-align: center; }
  `;

  private browser() {
    return html`
      <div class="row tabs">
        <div class="tab">${strip(10, [
          at(35, 20, ic(20, svg`<g transform="translate(5.500 5.500) scale(.58)"><path d="M2 8l5-5v5z" fill="#ea4335"/><path d="M2 8h5v11H2z" fill="#2b6fe0"/><path d="M7 3h11v5H7z" fill="#fbbc04"/><path d="M7 8h11v8H7z" fill="#0b4f63"/><path d="M7 16h11v5H3l4-2zM18 8l5-3v14l-5-3z" fill="#2e9e4f"/></g><path d="M12 1.300A10.700 10.700 0 1022.700 12" fill="none" stroke="#8ab4f8" stroke-width="2.600"/>`)),
          tx(55, 197, "Meet - gqy-xnbw-nvs"), at(262.5, 15, rec(15)), at(290, 11, cross(11, 4)),
        ])}</div>
        <div class="rest grey">${strip(310, [at(337, 15, plus(15, 3.4))])}</div>
        <div class="ctl">${strip(344.5, [at(1719.6, 13, chev(13, false, 1.8)), at(1776, 13, ic(13, line("M0 12h24", 2))),
          at(1833, 13, ic(13, svg`<rect x="1" y="5" width="18" height="18" rx="3" fill="none" stroke="currentColor" stroke-width="2"/><path d="M5 2h13q5 0 5 5v12" fill="none" stroke="currentColor" stroke-width="2"/>`)), at(1891, 13, cross(14, 1.8))])}</div>
      </div>
      <div class="row nav">${strip(0, [
        at(27.5, 18, html`<span class="faint">${ic(17, line("M23 12H2M12 1.500L1.500 12 12 22.500", 2.3))}</span>`),
        at(67.5, 18, html`<span class="faint">${ic(17, line("M1 12h21M12 1.500L22.500 12 12 22.500", 2.3))}</span>`),
        at(107.5, 17, cross(17, 3.2)),
        { x: 135, w: 1610, c: html`<div class="omni">${strip(135, [
          at(157.5, 14, html`<span class="grey">${ic(15, fillP(P.lock), 16)}</span>`),
          tx(178, 312, "meet.google.com"), tx(312, 429, "/gqy-xnbw-nvs", "dim"),
          at(1642.5, 20, html`<span class="grey">${ic(20, fillP(P.mic), 22)}</span>`),
          at(1682.5, 20, html`<span class="grey">${share(20)}</span>`), at(1722.5, 22, html`<span class="grey">${ic(22, fillP(P.star))}</span>`),
        ])}</div>` },
        at(1772.6, 20, ic(20, fillP(P.puzzle), 22)),
        at(1812.6, 18, ic(18, fillP("M0 0h24v24H0zM4 4h9.500v16H4z"))),
        at(1853, 28, html`<div class="av">K</div>`),
        at(1892, 5, ic(5, svg`<circle cx="3" cy="3" r="2"/><circle cx="3" cy="10" r="2"/><circle cx="3" cy="17" r="2"/>`, 20, "0.500 0 5 20")),
      ])}</div>
      <div class="edge"></div>`;
  }

  private diagramApp() {
    const g = (cls: string, c: TemplateResult) => html`<span class=${cls}>${c}</span>`;
    return html`
      <div class="row vtabs">
        ${vtabs.map(([icon, name, w, r]) => html`<div class="vt ${r ? "r" : ""}">${icon}${r ? rec(12) : ""}<div class="name"><fit-label .text=${name} .w=${w}></fit-label></div></div>`)}
        <div class="vt on">${dio}<div class="name"><fit-label .text=${"AWS RDS Read Re"} .w=${83}></fit-label></div>${strip(0, [at(9.5, 8, cross(8, 4))])}</div>
        <div class="vctl">${strip(1385, [at(1404.5, 11, plus(11, 4)), at(1476.5, 9, chev(9)), at(1515, 9, ic(9, line("M0 12h24", 3))),
          at(1554, 9, ic(9, svg`<rect x="1" y="5" width="18" height="18" rx="3" fill="none" stroke="currentColor" stroke-width="2.800"/><path d="M6 2h12q5 0 5 5v12" fill="none" stroke="currentColor" stroke-width="2.500"/>`)), at(1593.5, 10, cross(9.5, 3))])}</div>
      </div>
      <div class="row vnav">${strip(309, [
        at(326.5, 9, g("mid", ic(9, line("M22 2v20L2 12z", 2), 11))), at(353.5, 9, g("mid", ic(9, line("M2 2v20L22 12z", 2), 11))),
        at(381, 12, ic(12, svg`<path d="M21 12a9 9 0 11-3-7" fill="none" stroke="currentColor" stroke-width="3"/><path d="M22 1v8h-8z" fill="currentColor"/>`)),
        at(519, 9, ic(8, line("M3 1h18v21l-9-7-9 7z", 2.6), 11)),
        { x: 539, w: 844, c: html`<div class="vurl">${strip(539, [
          at(553, 11, g("p", ic(11, svg`<g fill="none" stroke="currentColor" stroke-width="2.400"><circle cx="6" cy="6" r="4"/><path d="M10 6h13M1 18h13"/><circle cx="18" cy="18" r="4"/></g>`))),
          tx(567.7, 657.8, "app.diagrams.net"), tx(657.8, 881, "/#G1ORATMuiKYIRjkvzhi3D7cJcwP7X-RqoJ", "p"),
          at(1278.6, 12, g("grey", ic(12, line("M17 18H2V4h20v9M5 18h7M18 15v7M15 19l3 3 3-3", 1.9)))), at(1305.5, 12, g("grey", ic(12, line("M3 8v14h16v-5M7 15Q8 6 19 6M14 1l6 5-6 5", 2), 13))),
          at(1322, 1, html`<svg class="ic" width="1" height="15"><path d="M.5 0v15" stroke="#555a68"/></svg>`),
          at(1338.8, 15, brave(15)), at(1367.4, 15, ic(15, svg`<path d="M12 2L1 22h22z" fill="#662d91"/><path d="M12 2L1 22l11-5z" fill="#ff4724"/><path d="M12 2v15l11 5z" fill="#9e1f63"/><path d="M12 9l-4.500 8h9z" fill="#fff"/>`, 15)),
        ])}</div>` },
        at(1471.8, 12, ic(12, svg`<path d="M1 1h22v22H1z" fill="none" stroke="currentColor" stroke-width="2.400"/><path d="M15 1h8v22h-8z" fill="currentColor"/>`, 11)),
        at(1506, 17, ic(17, svg`<path d="M2 5h16v4h3v12H2zM21 12h-6v4h6" fill="none" stroke="currentColor" stroke-width="1.800"/><circle cx="18.500" cy="7" r="7" fill="#ff6226"/>`, 15)),
        at(1541, 8, ic(8, svg`<circle cx="12" cy="12" r="11.500" fill="#b9bdc9"/><path d="M4 12h16" stroke="#2f3445" stroke-width="2"/>`)),
        tx(1549, 1568.6, "VPN", "vpn"), at(1594, 11, ic(11, line("M0 3h24M0 12h24M0 21h24", 2.6))),
      ])}</div>
      <div class="row marks">${bookmarks.map(([n, w]) => html`<div class="bm">${folder}<fit-label .text=${n} .w=${w}></fit-label></div>`)}</div>
      <div class="vedge"></div>
      <div class="row menu">${strip(309, [
        tx(319.5, 337, "File"), tx(349.6, 369.4, "Edit"), tx(382.5, 407.3, "View"), tx(420.4, 462, "Arrange"), tx(474.7, 505.4, "Extras"), tx(518.2, 542.8, "Help"),
        tx(556, 672, "Last change 1 minute ago", "chg"), tx(1527.8, 1574, "aungbo htet", "usr"), at(1582, 6, g("mid", caret(6))),
        at(1596.8, 13, ic(13, svg`<circle cx="12" cy="12" r="5" fill="none" stroke="currentColor" stroke-width="2"/><path d="M12 0v4M12 20v4M0 12h4M20 12h4M3.500 3.500l3 3M17.500 17.500l3 3M3.500 20.500l3-3M17.500 6.500l3-3" stroke="currentColor" stroke-width="2"/>`)),
      ])}</div>
      <div class="row tools">${strip(309, [
        at(327, 14, ic(14, svg`<path d="M1 1h22v22H1zM1 6h22" fill="none" stroke="currentColor" stroke-width="2"/><path d="M15 6h8v17h-8z" fill="#999" stroke="currentColor" stroke-width="1.500"/>`, 15)), at(343, 7, g("mid", caret())),
        tx(370, 392, "70%"), at(409.4, 7, g("mid", caret())), at(424.6, 1, html`<svg class="ic" width="1" height="20"><path d="M.5 0v20" stroke="#dfe1e1"/></svg>`),
        at(443, 13, ic(13, svg`<circle cx="10" cy="10" r="8" fill="none" stroke="currentColor" stroke-width="2.600"/><path d="M16 16l7 7M6 10h8M10 6v8" stroke="currentColor" stroke-width="2.800"/>`)),
        at(468.5, 13, ic(13, svg`<circle cx="10" cy="10" r="8" fill="none" stroke="currentColor" stroke-width="2.600"/><path d="M16 16l7 7M6 10h8" stroke="currentColor" stroke-width="2.800"/>`)),
        at(503.7, 13, ic(13, svg`<path d="M23 18Q20 6 6 9" fill="none" stroke="currentColor" stroke-width="3.500"/><path d="M0 4v13h12z" fill="currentColor"/>`, 11)),
        at(530, 12, g("off", ic(12, svg`<path d="M2 18Q4 6 17 9" fill="none" stroke="currentColor" stroke-width="3"/><path d="M24 4v13H12z" fill="currentColor"/>`, 10))),
        at(566, 11, g("off", ic(11, fillP("M1 4h7V1h8v3h7v3H1zM3 9h18v15H3z"), 14))),
        at(601.5, 14, g("off", ic(14, svg`<path d="M1 1h14v14H1z" fill="currentColor"/><path d="M18 7v11H7v5h16V7z" fill="currentColor" opacity=".8"/>`))),
        at(627, 14, g("off", ic(14, svg`<path d="M1 1h9v9H1zM6 12h4v5H6zM12 6h5v4h-5z" fill="currentColor"/><path d="M12 12h10v10H12z" fill="none" stroke="currentColor" stroke-width="2"/>`))),
        at(662, 14, g("off", ic(14, fillP("M10 1v4l11 9-10 9L2 14l7-8V1zM22 16q3 5 0 6-3-1 0-6z")))),
        at(687.6, 17, g("off", ic(17, svg`<path d="M5 17l2-5L17 2l4 3-10 10z" fill="currentColor"/><path d="M0 22h24" stroke="currentColor" stroke-width="3"/>`, 15))),
        at(713.3, 13, g("off", ic(13, line("M2 2h17v17H2zM5 22h18V6", 2.6)))),
        at(749.5, 13, ic(13, svg`<path d="M0 12h20" stroke="currentColor" stroke-width="2.500"/><path d="M24 12l-7-5v10z" fill="currentColor"/>`)), at(764, 6.5, g("mid", caret(6.5))),
        at(786.5, 14, ic(14, line("M2 17v-1M3 20h2v-8h13V4h5M1 18h5v5H1z", 2))), at(801, 6.5, g("mid", caret(6.5))),
        at(833, 12, g("blk", plus(12, 5))), at(849, 6.5, caret(6.5)), at(880, 12, ic(12, line("M1 1h22v22H1zM1 8.500h22M1 15.500h22M8.500 1v22M15.500 1v22", 2))), at(895.5, 6.5, g("mid", caret(6.5))),
        at(1559.8, 11, ic(11, line("M1 7V1h6M17 1h6v6M23 17v6h-6M7 23H1v-6", 2.4))), at(1577, 10, ic(10, line("M1 1h22v22H1zM13 1v22M17 4v16", 2.2))),
        at(1594, 10, ic(10, line("M2 2l10 8L22 2M2 13l10 8 10-8", 2.6))),
      ])}</div>
      <div class="work">
        <div class="side">
          <div class="scroll"><div class="lib">
            <div class="search">${strip(317, [tx(320.5, 390, "Search Shapes"), at(463, 10, mag(11, 3))])}</div>
            <div class="sec">${strip(309, [at(316.5, 7, g("mid", caret(6.5))), tx(325, 380, "Scratchpad"), tx(415.5, 420.5, "?", "g"), at(431, 8, plus(8, 3)), at(447.5, 10, ic(10, line("M2 22l2-6L18 2l4 4L8 20z", 2.6))), at(465, 8, cross(8, 2.6))])}</div>
            <div class="drop">${strip(322.5, [tx(348, 443, "Drag elements here")])}</div>
            <div class="hr"></div>
            <div class="sec gen">${strip(309, [at(316.5, 7, g("mid", caret(6.5))), tx(325, 363, "General")])}</div>
            <div class="hr2"></div>
            <div class="shapes">${shapes}</div>
            ${[["Misc", 348], ["Advanced", 374], ["Basic", 350]].map(([t, x]) => html`<div class="sec closed">${strip(309, [at(316, 4, g("mid", caretR)), tx(325.5, x as number, t as string)])}</div>`)}
          </div><div class="thumb"></div></div>
          <div class="more">${strip(349, [tx(356.5, 440, "+ More Shapes")])}</div>
        </div>
        <div class="main">${diagram}
          <div class="row pages">${strip(489, [
            at(502, 4, g("mid", ic(4, svg`<circle cx="2" cy="2" r="1.800"/><circle cx="2" cy="7.500" r="1.800"/><circle cx="2" cy="13" r="1.800"/>`, 14, "0 0 4 15"))),
            { x: 515.5, w: 61, c: html`<div class="ptab">${strip(515.5, [tx(525, 556, "Page-1"), at(565, 7, chev(7, true, 3))])}</div>` }, at(589.5, 12, plus(12, 2.8)),
          ])}</div>
        </div>
      </div>`;
  }

  private innerTaskbar() {
    const b = (cx: number, c: TemplateResult, extra: unknown = "", hot = false) => at(cx, 32, html`<div class="tb ${hot ? "hot" : ""}">${c}${extra}</div>`);
    const dot = html`<i></i>`;
    return html`<div class="row vbar">${strip(309, [
      at(336, 24, ic(24, svg`<path d="M5 21a4.500 4.500 0 010-9 6 6 0 0111-1 5 5 0 013 10z" fill="#b9cdf0"/><circle cx="17" cy="7" r="7" fill="#fb9a97"/><text x="14.500" y="10.500" font-size="10" fill="#222">1</text>`)),
      { x: 351.7, w: 34, c: html`<div class="two v"><fit-label .text=${"66°F"} .w=${20}></fit-label><fit-label .text=${"Cloudy"} .w=${32.5}></fit-label></div>` },
      at(603, 20, win(20, "#7fe0ff", "#1fa2ee", "w1")),
      { x: 625, w: 185, c: html`<div class="vs">${strip(625, [at(641, 13, mag(13)), tx(655.5, 691, "Search"), at(786.5, 44, html`<div class="brief">${ic(21, svg`<path d="M8 5V2h8v3" fill="none" stroke="#8a4d08" stroke-width="2"/><rect x="1" y="5" width="22" height="17" rx="1.500" fill="#d98210"/><path d="M1 5h22v7H1z" fill="#b96607"/><rect x="10" y="10" width="4" height="4" fill="#ffd25a"/>`, 18)}</div>`)])}</div>` },
      b(832.3, desktopsDark(20)), b(868.8, meetChat(19)),
      b(906.5, ic(20, svg`<path d="M8 6V2h8v4" fill="none" stroke="#3fb3ec" stroke-width="1.800"/><path d="M1 5h22v15q0 3-3 3H4q-3 0-3-3z" fill="#f4f4f4"/><path d="M7.500 9h4v4h-4z" fill="#f25022"/><path d="M12.500 9h4v4h-4z" fill="#7fba00"/><path d="M7.500 14h4v4h-4z" fill="#00a4ef"/><path d="M12.500 14h4v4h-4z" fill="#ffb900"/>`)),
      b(943.8, edge(21), dot), b(981, explorer(20), dot),
      b(1018.8, ic(20, svg`<path d="M1 9L12 1l11 8v13H1z" fill="#1167b8"/><path d="M4 7h16v9H4z" fill="#eaf5fd"/><path d="M1 9l11 8 11-8v13H1z" fill="#3aa5ec"/>`, 18)),
      b(1056.5, ic(21, svg`<rect x="1" y="1" width="21" height="17" fill="#2e3236" stroke="#aaa" stroke-width="1.200"/><path d="M3 4l3 2-3 2" stroke="#eee" fill="none"/><path d="M8 14l4-4 4 4-4 4z" fill="#e44"/><path d="M13 18l6-8 4 5-6 8z" fill="#5ad04a"/><path d="M11 17l4 2-1 4z" fill="#38f"/>`)),
      b(1093.8, ic(21, svg`<path d="M6 20a5.500 5.500 0 010-10.500 7 7 0 0112 0A5.500 5.500 0 0118 20h-3v-5q-3-4-6 0v5z" fill="#eef5fb" stroke="#2e74ad" stroke-width="1.800"/><path d="M9 14q3-4 6 0v6H9z" fill="#2e74ad"/><path d="M10.500 15q1.500-2 3 0v6h-3z" fill="#1b1b2a"/>`)),
      b(1130.7, brave(20), dot, true),
      b(1168.4, ic(20, svg`<path d="M4 2h16q3 2 3 9t-4 8l-6 1-5 4v-4Q2 19 1.500 12 1 4 4 2z" fill="#7d67ee"/><path d="M5 4h14q2 2 1.500 7T18 17l-6 1-3 2v-2q-5-1-5-7 0-5 1-7z" fill="#fff"/><g transform="translate(5 3.500) scale(.6)"><path d=${P.phone} fill="#7360f2"/></g>`), html`${dot}<b>2</b>`),
      b(1205.7, ic(21, svg`<circle cx="12" cy="12" r="10.500" fill="none" stroke="#fff" stroke-width="1.500" stroke-dasharray="1 2.400"/><circle cx="12" cy="13.500" r="8" fill="#fff"/><circle cx="12" cy="14" r="3.200" fill="#40302a"/><path d="M12 14l6-8" stroke="#40302a" stroke-width="2"/>`), dot),
      b(1243.5, ic(18, svg`<rect x="2" y="2" width="20" height="20" rx="1" fill="#4ab6e8"/><path d="M5 8h14M5 12h14M5 16h14" stroke="#14557e" stroke-width="2"/><path d="M2 22h20" stroke="#d9a520" stroke-width="2.500"/><path d="M5 1v3M9 1v3M13 1v3M17 1v3" stroke="#123"/>`, 20), dot),
      b(1280.3, whatsapp(21), dot),
      b(1318, ic(20, svg`<circle cx="12" cy="12" r="10.500" fill="#2b2a33" stroke="#c8c8cc" stroke-width="1.500"/><g fill="none" stroke="#d0d0d4" stroke-width="2.200"><path d="M12 12q-5-2-3-7M12 12q6-2 8 3M12 12q0 6-6 6"/></g>`), html`${dot}<b class="rd"></b>`),
      at(1399, 10, chev(10, true, 3)), at(1426.5, 16, html`<span class="lime">${ic(17, fillP(P.mic))}</span>`), tx(1449.5, 1469, "ENG"),
      at(1490.6, 15, ic(15, svg`<path d="M15 4H2v14h18v-6M8 22h8M12 18v4" fill="none" stroke="currentColor" stroke-width="1.800"/><path d="M17 2h5v7h-5zM19.500 9v4" fill="none" stroke="currentColor" stroke-width="1.800"/>`)),
      at(1511.5, 15, volume(15)), at(1531.4, 16, battery(16)),
      { x: 1552.7, w: 47.3, c: html`<div class="two v"><div class="in1"><fit-label .text=${"8:33 PM"} .w=${36.8}></fit-label></div><fit-label .text=${"9/18/2023"} .w=${47.3}></fit-label></div>` },
    ])}</div>`;
  }

  private controls() {
    const btn = (cx: number, c: TemplateResult, cls = "", w = 50, extra: unknown = "") => at(cx, w, html`<div class="btn ${cls}">${c}${extra}</div>`);
    return html`<div class="bar">${strip(0, [
      tx(30, 105, "8:34 PM"), at(121.5, 1, html`<div class="sep"></div>`), tx(137, 273, "gqy-xnbw-nvs"),
      btn(723, ic(24, fillP(P.micOff)), "red"), btn(788, ic(25, fillP(P.camOff)), "red"),
      btn(853, ic(26, svg`<rect x="2.500" y="3.500" width="19" height="17" rx="1" fill="none" stroke="#fff" stroke-width="2.200"/><text x="4.800" y="15.600" font-size="9.500" font-weight="900" fill="#fff" textLength="14.400" lengthAdjust="spacingAndGlyphs">CC</text>`)),
      btn(918, ic(31, fillP(P.mood))),
      btn(983, ic(30, svg`<rect x="2" y="3" width="20" height="18" rx="1.200" fill="none" stroke="#fff" stroke-width="2.100"/><path d="M12 7.200l4.500 4.500h-3V16h-3v-4.300h-3z" fill="#fff"/>`)),
      btn(1048, ic(27, fillP(P.hand), 30)),
      btn(1113, ic(6, svg`<circle cx="3" cy="3" r="2.700"/><circle cx="3" cy="10.500" r="2.700"/><circle cx="3" cy="18" r="2.700"/>`, 21, "0 0 6 21"), "", 50, html`<i></i>`),
      btn(1188, ic(30, fillP(P.hang)), "red", 70),
      at(1695, 31, ic(31, svg`<circle cx="12" cy="12" r="9" fill="none" stroke="#fff" stroke-width="2"/><path d="M11 10.500h2V17h-2zM11 7h2v2h-2z"/>`)),
      at(1755, 30, html`<div class="ppl">${ic(30, fillP(P.people))}<b>5</b></div>`),
      at(1815, 31, ic(31, fillP(P.chat))),
      at(1875.5, 28, ic(28, svg`<path d="M12 3.500L16.500 10.800H7.500z" fill="none" stroke="#fff" stroke-width="2.200"/><path d="M3 14.500h6v6.500H3z" fill="none" stroke="#fff" stroke-width="2.200"/><circle cx="17.500" cy="17.700" r="3.800" fill="none" stroke="#fff" stroke-width="2.200"/>`, 30)),
    ])}</div>`;
  }

  private osTaskbar() {
    const o = (cx: number, c: TemplateResult, extra: unknown = "") => at(cx, 36, html`<div class="oi">${c}${extra}</div>`);
    return html`<div class="row os">${strip(0, [
      at(40, 32, cloudMoon),
      { x: 64.5, w: 94, c: html`<div class="two o"><fit-label .text=${"27°C"} .w=${31.5}></fit-label><fit-label class="sub" .text=${"Mostly cloudy"} .w=${94}></fit-label></div>` },
      at(516.5, 29, win(29, "#4cc7fb", "#0272d2", "w2")),
      { x: 548.5, w: 273, c: html`<div class="pill">${strip(549.5, [at(572, 20, html`<span class="ink">${mag(20)}</span>`), tx(594, 645, "Search"),
        at(802, 25, ic(25, svg`<defs><linearGradient id="bi" x1="0" y1="0" x2="0" y2="1"><stop offset="0" stop-color="#35b6f4"/><stop offset="1" stop-color="#1d4fd0"/></linearGradient></defs><path d="M12 1.300a10.500 10.500 0 110 21.200H1.700V12A10.500 10.500 0 0112 1.300z" fill="#fff" stroke="url(#bi)" stroke-width="1.700"/><path d="M8 5l3 1.200v8.500l4-2.200-2-1-1-2.500 6 2.200v3L11 19l-3-2z" fill="url(#bi)"/>`))])}</div>` },
      o(852.7, desktops(29)), o(907, meetChat(28)), o(963, explorer(30)), o(1018, postman(29)), o(1072.6, chrome(30)), o(1127.7, mysql(29)), o(1183, firefox(29)), o(1238, vs(29)), o(1293, slack(30)),
      o(1348, whatsapp(29), html`<i></i>`), o(1403, chrome(30), html`<i></i><b>K</b>`),
      at(1653, 13, chev(13, true, 2.6)),
      at(1692.5, 20, ic(20, svg`<g fill="none" stroke="#444" stroke-width="1.500"><rect x="8.500" y="2" width="7" height="13" rx="3.500"/><path d="M5 11.500q0 7 7 7t7-7M12 18.500V23"/></g>`)),
      at(1732.5, 18, ic(18, svg`<g fill="none" stroke="#222" stroke-width="1.800"><path d="M1.500 10q10.500-10 21 0M5 14q7-7 14 0M8.500 17.500q3.500-3.500 7 0"/></g><circle cx="12" cy="20" r="1.800" fill="#222"/>`)),
      at(1762, 20, volume(20)), at(1793, 21, battery(21)),
      { x: 1823.5, w: 77.5, c: html`<div class="two o"><div class="in2"><fit-label .text=${"8:34 PM"} .w=${53}></fit-label></div><fit-label .text=${"09/18/2023"} .w=${77.5}></fit-label></div>` },
    ])}</div>`;
  }

  render() {
    return html`<div class="page">
      ${this.browser()}
      <div class="meet">
        <div class="presenting">${strip(20, [
          at(55, 30, ic(30, svg`<defs><clipPath id="cp"><circle cx="15" cy="15" r="15"/></clipPath></defs><g clip-path="url(#cp)"><circle cx="15" cy="15" r="15" fill="#fff"/><text x="0" y="15.500" font-family="Liberation Serif, serif" font-size="11.500" font-weight="normal" fill="#222" textLength="25">.inux</text><path d="M0 18.500q9 2.500 26-2l.5 1.200Q12 19.500 0 22z" fill="#ef8a1c"/><path d="M4 19q10 0 22-3v-.8Q14 18 4 18z" fill="#e0402a"/><path d="M27 17l1.500 4-5 2.500z" fill="#e4a013"/><path d="M27 8l3 6-1.500 5z" fill="#333"/></g>`, 30, "0 0 30 30")),
          tx(90, 265, "abh edu (Presenting)"),
        ])}</div>
        <div class="video">${this.diagramApp()}${this.innerTaskbar()}</div>
        <div class="tile">
          <div class="k">K</div>
          <div class="nm"><fit-label .text=${"Kaung Kyaw Moe"} .w=${139}></fit-label></div>
          <div class="mb">${ic(21, fillP(P.micOff))}</div>
        </div>
        ${this.controls()}
      </div>
      ${this.osTaskbar()}
    </div>`;
  }
}
